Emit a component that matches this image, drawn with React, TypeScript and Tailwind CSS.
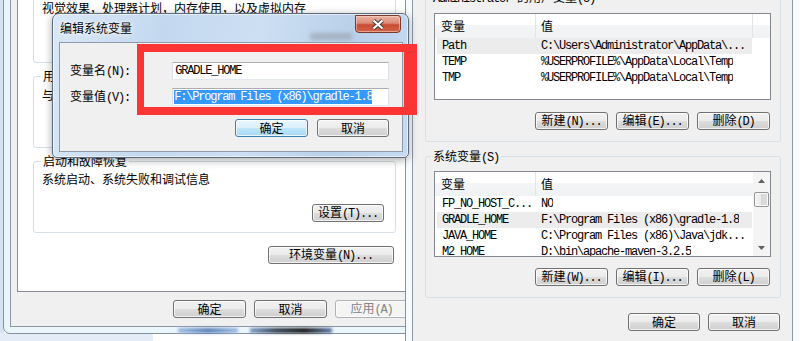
import type { ReactNode } from 'react';

const cjk = "font-['Noto_Sans_CJK_SC',sans-serif]";
const mono = "font-['Liberation_Mono','Noto_Sans_CJK_SC',monospace] tracking-[-1.2px]";

// SimSun-ish mixed label: CJK part + fixed-width latin part
function Label({ zh, en, pre }: { zh: string; en?: string; pre?: string }) {
  return (
    <span className="whitespace-pre text-[12px] leading-[14px]">
      {pre && <span className={mono}>{pre}</span>}
      <span className={cjk}>{zh}</span>
      {en && <span className={mono}>{en}</span>}
    </span>
  );
}

type BtnKind = 'normal' | 'default' | 'disabled';

function Btn({
  zh,
  en,
  w = 'w-[73px]',
  kind = 'normal',
}: {
  zh: string;
  en?: string;
  w?: string;
  kind?: BtnKind;
}) {
  const skin =
    kind === 'default'
      ? 'border-[#3c7fb1] bg-[linear-gradient(to_bottom,#eaf6fd_0%,#d9f0fc_50%,#bee6fd_50%,#a7d9f5_100%)] text-black'
      : kind === 'disabled'
        ? 'border-[#adb2b5] bg-[#f4f4f4] text-[#838383]'
        : 'border-[#707070] bg-[linear-gradient(to_bottom,#f2f2f2_0%,#ebebeb_50%,#dddddd_50%,#cfcfcf_100%)] text-black';
  return (
    <div
      className={`flex h-[18px] shrink-0 items-center justify-center rounded-[3px] border shadow-[inset_0_0_0_1px_rgba(255,255,255,0.75)] ${w} ${skin}`}
    >
      <Label zh={zh} en={en} />
    </div>
  );
}

function Group({
  title,
  labelClass,
  className,
  children,
}: {
  title: ReactNode;
  labelClass: string;
  className: string;
  children: ReactNode;
}) {
  return (
    <div className={`relative shrink-0 rounded-[3px] border border-[#d5dfe5] ${className}`}>
      <span className={`absolute -top-[8px] px-[2px] leading-[14px] ${labelClass}`}>{title}</span>
      {children}
    </div>
  );
}

type Row = [string, string];

function Scrollbar() {
  return (
    <div className="flex w-[17px] shrink-0 flex-col items-center bg-[#f4f4f4]">
      <div className="flex h-[17px] items-center justify-center">
        <svg width="7" height="4" viewBox="0 0 7 4">
          <path d="M0 4 L3.5 0 L7 4 Z" fill="#606060" />
        </svg>
      </div>
      <div className="mt-[3px] h-[15px] w-[15px] rounded-[2px] border border-[#959595] bg-[linear-gradient(to_right,#f3f3f3_0%,#e9e9e9_50%,#d8d8d8_50%,#dcdcdc_100%)] shadow-[inset_0_0_0_1px_#fafafa]" />
      <div className="flex-1" />
      <div className="flex h-[17px] items-center justify-center">
        <svg width="7" height="4" viewBox="0 0 7 4">
          <path d="M0 0 L3.5 4 L7 0 Z" fill="#606060" />
        </svg>
      </div>
    </div>
  );
}

function ListView({
  rows,
  selected,
  scroll,
  h,
}: {
  rows: Row[];
  selected: number;
  scroll?: boolean;
  h: string;
}) {
  return (
    <div className={`ml-[8px] flex w-[337px] overflow-hidden border border-[#828790] bg-white ${h}`}>
      <div className="flex min-w-0 flex-1 flex-col">
        <div className="flex h-[24px] shrink-0 bg-[linear-gradient(to_bottom,#ffffff_0%,#ffffff_45%,#f4f5f7_45%,#f1f2f4_100%)]">
          <div className="flex w-[101px] items-center border-r border-[#e3e4e8] pl-[6px]">
            <Label zh="变量" />
          </div>
          <div className={`flex items-center pl-[5px] ${scroll ? 'flex-1' : 'w-[217px] border-r border-[#e3e4e8]'}`}>
            <Label zh="值" />
          </div>
          {!scroll && <div className="flex-1" />}
        </div>
        {rows.map(([name, value], i) => (
          <div
            key={name}
            className={`ml-[2px] flex h-[16px] w-[315px] shrink-0 items-center text-[12px] leading-[14px] ${mono} ${
              i === selected ? 'bg-[#ececec]' : ''
            }`}
          >
            <span className="w-[99px] overflow-hidden whitespace-pre pl-[5px]">{name}</span>
            <span className="overflow-hidden whitespace-pre pl-[5px]">{value}</span>
          </div>
        ))}
      </div>
      {scroll && <Scrollbar />}
    </div>
  );
}

function SystemProperties() {
  return (
    <div className="absolute left-[3px] top-[-40px] flex h-[374px] w-[420px] flex-col rounded-b-[7px] border border-[#84919f] bg-[#ebf6fb] px-[6px] pb-[6px] pt-[19px]">
      <div className="flex flex-1 flex-col border border-[#8c97a5] bg-[#f0f0f0]">
        <div className="ml-[6px] h-[311px] w-[400px] border-b border-l border-[#898c95] bg-white pl-[15px]">
          <div className="flex w-[363px] flex-col">
            <Group title={<Label zh="性能" />} labelClass="left-[7px] bg-white" className="mt-[7px] h-[75px]">
              <div className="pl-[8px] pt-[12px]">
                <Label zh="视觉效果，处理器计划，内存使用，以及虚拟内存" />
              </div>
              <div className="mt-[19px] flex justify-end pr-[11px]">
                <Btn zh="设置" en="(S)..." w="w-[72px]" />
              </div>
            </Group>
            <Group title={<Label zh="用户配置文件" />} labelClass="left-[7px] bg-white" className="mt-[13px] h-[72px]">
              <div className="pl-[8px] pt-[11px]">
                <Label zh="与您登录有关的桌面设置" />
              </div>
            </Group>
            <Group title={<Label zh="启动和故障恢复" />} labelClass="left-[7px] bg-white" className="mt-[13px] h-[72px]">
              <div className="pl-[8px] pt-[10px]">
                <Label zh="系统启动、系统失败和调试信息" />
              </div>
              <div className="mt-[18px] flex justify-end pr-[11px]">
                <Btn zh="设置" en="(T)..." w="w-[72px]" />
              </div>
            </Group>
            <div className="mr-[2px] mt-[13px] flex justify-end">
              <Btn zh="环境变量" en="(N)..." w="w-[126px]" />
            </div>
          </div>
        </div>
        <div className="ml-[162px] mt-[8px] flex gap-[8px]">
          <Btn zh="确定" />
          <Btn zh="取消" />
          <Btn zh="应用" en="(A)" kind="disabled" />
        </div>
      </div>
    </div>
  );
}

function EnvWindow() {
  const userRows: Row[] = [
    ['Path', 'C:\\Users\\Administrator\\AppData\\...'],
    ['TEMP', '%USERPROFILE%\\AppData\\Local\\Temp'],
    ['TMP', '%USERPROFILE%\\AppData\\Local\\Temp'],
  ];
  const sysRows: Row[] = [
    ['FP_NO_HOST_C...', 'NO'],
    ['GRADLE_HOME', 'F:\\Program Files (x86)\\gradle-1.8'],
    ['JAVA_HOME', 'C:\\Program Files (x86)\\Java\\jdk...'],
    ['M2_HOME', 'D:\\bin\\apache-maven-3.2.5'],
  ];
  return (
    <div className="absolute left-[405px] top-[-40px] flex h-[400px] w-[395px] flex-col border-l border-[#84919f] bg-[#f7fbfd] pl-[6px] pr-[7px] pt-[20px]">
      <div className="flex flex-1 flex-col border-x border-t border-[#8c97a5] bg-[#f0f0f0] pl-[12px]">
        <Group
          title={<Label pre="Administrator " zh="的用户变量" en="(U)" />}
          labelClass="left-[5px] bg-[#f0f0f0]"
          className="mt-[16px] h-[145px] w-[356px]"
        >
          <div className="flex flex-col">
            <div className="mt-[15px]">
              <ListView rows={userRows} selected={0} h="h-[87px]" />
            </div>
            <div className="mt-[12px] flex justify-end gap-[8px] pr-[10px]">
              <Btn zh="新建" en="(N)..." />
              <Btn zh="编辑" en="(E)..." />
              <Btn zh="删除" en="(D)" />
            </div>
          </div>
        </Group>
        <Group
          title={<Label zh="系统变量" en="(S)" />}
          labelClass="left-[5px] bg-[#f0f0f0]"
          className="mt-[14px] h-[142px] w-[356px]"
        >
          <div className="flex flex-col">
            <div className="mt-[14px]">
              <ListView rows={sysRows} selected={1} scroll h="h-[86px]" />
            </div>
            <div className="mt-[11px] flex justify-end gap-[8px] pr-[10px]">
              <Btn zh="新建" en="(W)..." />
              <Btn zh="编辑" en="(I)..." />
              <Btn zh="删除" en="(L)" />
            </div>
          </div>
        </Group>
        <div className="mt-[15px] flex justify-end gap-[8px] pr-[12px]">
          <Btn zh="确定" w="w-[72px]" />
          <Btn zh="取消" w="w-[72px]" />
        </div>
      </div>
    </div>
  );
}

function EditDialog() {
  return (
    <div className="absolute left-[52px] top-[13px] flex h-[145px] w-[357px] flex-col rounded-t-[7px] rounded-b-[5px] border border-[#5d6b7c] bg-[linear-gradient(100deg,#d9e8f7_0%,#c3d8ef_30%,#cddff3_55%,#b9d0ea_80%,#c6dbf1_100%)] pb-[5px] pl-[6px] pr-[5px] shadow-[0_2px_8px_rgba(0,0,0,0.35),inset_0_0_0_1px_rgba(255,255,255,0.55)]">
      {/* blurred button seen through the glass */}
      <div className="absolute left-[257px] top-[19px] h-[7px] w-[42px] rounded-[2px] bg-[#98a3b0] opacity-70 blur-[2px]" />
      <div className="relative flex h-[28px] shrink-0 items-start justify-between">
        <span className="self-center pl-[1px] text-[12px] leading-[14px] [text-shadow:0_0_6px_#fff,0_0_3px_#fff]">
          <span className={cjk}>编辑系统变量</span>
        </span>
        <div className="mr-[2px] mt-[1px] flex h-[18px] w-[46px] items-center justify-center rounded-b-[4px] rounded-tr-[3px] border border-[#7b382c] bg-[linear-gradient(to_bottom,#eab4a6_0%,#dc8a77_45%,#c84c33_55%,#d2644a_100%)] shadow-[inset_0_0_0_1px_rgba(255,220,210,0.5)]">
          <svg width="14" height="11" viewBox="0 0 14 11">
            <path d="M2.5 1.5 L11.5 9.5 M11.5 1.5 L2.5 9.5" stroke="#3b3b3b" strokeWidth="4" />
            <path d="M2.5 1.5 L11.5 9.5 M11.5 1.5 L2.5 9.5" stroke="#ffffff" strokeWidth="2.2" />
          </svg>
        </div>
      </div>
      <div className="flex flex-1 flex-col border border-[#8e9bab] bg-[#f0f0f0] pl-[10px] pr-[13px] pt-[19px]">
        <div className="flex h-[18px] items-center">
          <div className="w-[103px]">
            <Label zh="变量名" en="(N):" />
          </div>
          <div className="flex h-[18px] w-[218px] items-center border border-[#abadb3] border-x-[#dbdfe6] border-b-[#e3e9ef] bg-white pl-[2px]">
            <span className={`whitespace-pre text-[12px] leading-[14px] ${mono}`}>GRADLE_HOME</span>
          </div>
        </div>
        <div className="mt-[8px] flex h-[18px] items-center">
          <div className="w-[103px]">
            <Label zh="变量值" en="(V):" />
          </div>
          <div className="flex h-[18px] w-[218px] items-center border border-[#abadb3] border-x-[#dbdfe6] border-b-[#e3e9ef] bg-white pl-[1px]">
            <span className={`whitespace-pre bg-[#3399ff] text-[12px] leading-[14px] text-white ${mono}`}>
              F:\Program Files (x86)\gradle-1.8
            </span>
          </div>
        </div>
        <div className="mt-[13px] flex justify-end gap-[9px]">
          <Btn zh="确定" kind="default" />
          <Btn zh="取消" w="w-[72px]" />
        </div>
      </div>
    </div>
  );
}

export default function App() {
  return (
    <div className={`relative h-[341px] w-[802px] overflow-hidden bg-white text-[12px] leading-[14px] text-black ${cjk}`}>
      {/* desktop / window behind */}
      <div className="absolute inset-y-0 left-0 w-[4px] bg-[#d6e3f3]" />
      <div className="absolute bottom-0 left-0 h-[8px] w-[153px] bg-[#e4ecf7]" />

      <SystemProperties />

      {/* blurred taskbar seen through the glass frame */}
      <div className="absolute left-[178px] top-[328px] flex h-[5px] gap-[12px] blur-[1.5px]">
        <div className="h-full w-[60px] bg-[linear-gradient(to_right,#9dbbe3,#5a7fb5,#9dbbe3)]" />
        <div className="h-full w-[82px] bg-[linear-gradient(to_right,#7d9cc7,#2f3b4d,#111,#5d7aa5)]" />
      </div>

      <EnvWindow />
      <EditDialog />

      {/* red annotation box */}
      <div className="absolute left-[137px] top-[44px] h-[71px] w-[280px] border-y-[8px] border-l-[7px] border-r-[13px] border-[#fb3434]" />
    </div>
  );
}
